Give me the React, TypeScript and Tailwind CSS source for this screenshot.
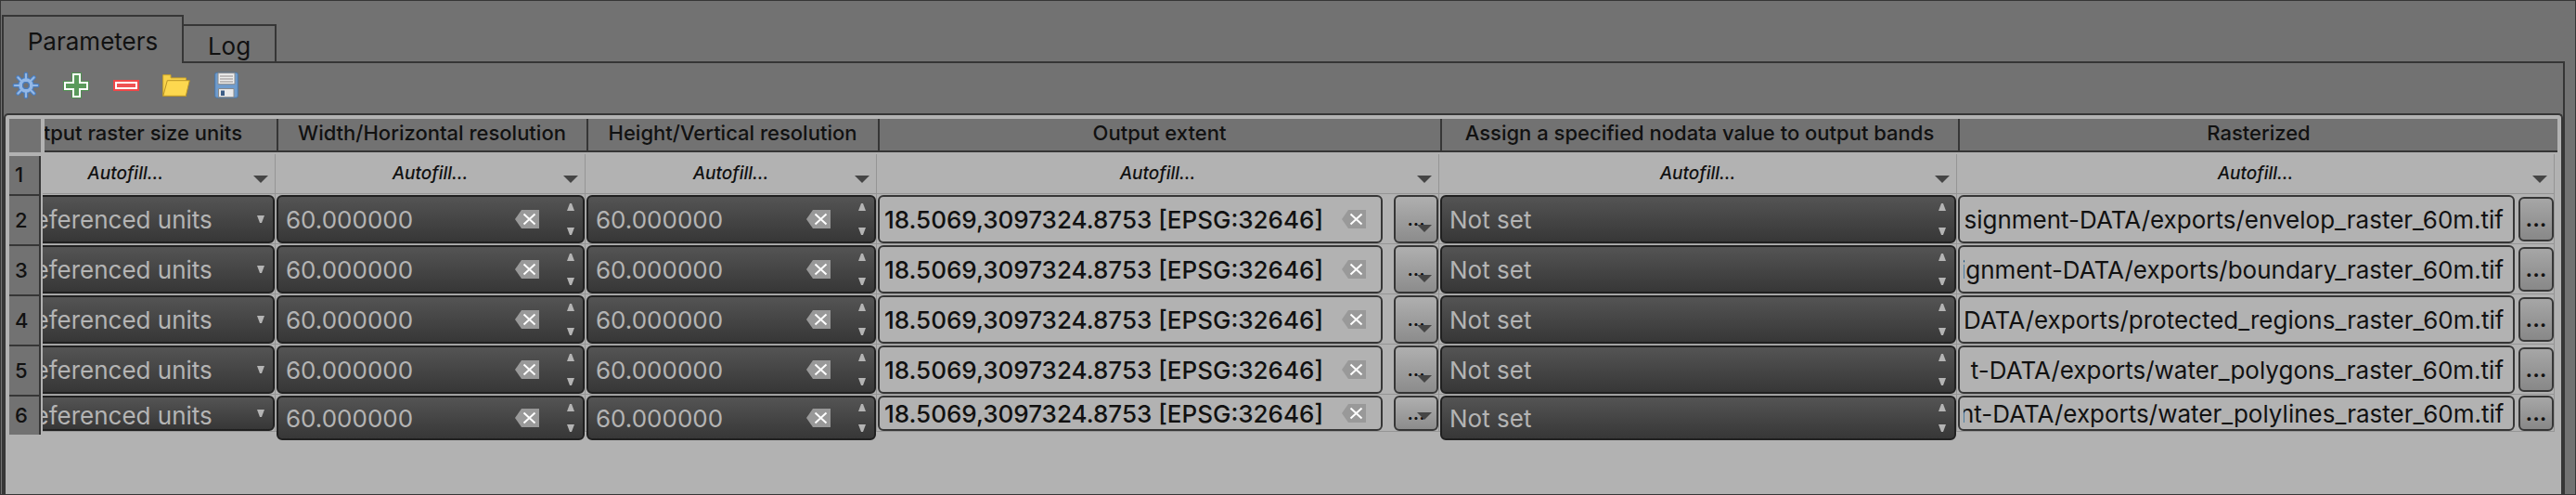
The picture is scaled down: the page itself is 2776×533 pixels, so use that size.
import React from "react";

const FONT = "font-[Inter,'Liberation_Sans',sans-serif]";

type RowSize = "normal" | "short";

function GearIcon() {
  return (
    <svg viewBox="0 0 30 30" className="size-[30px]" aria-hidden="true">
      {[
        { color: "#4a7dbd", width: 4.6 },
        { color: "#93b8e6", width: 2.2 },
      ].map((s) => (
        <g key={s.color} stroke={s.color} strokeWidth={s.width} strokeLinecap="round" fill="none">
          {[0, 45, 90, 135, 180, 225, 270, 315].map((a) => (
            <path key={a} d="M15 8.500V2.800" transform={`rotate(${a} 15 15)`} />
          ))}
          <circle cx="15" cy="15" r="5.800" strokeWidth={s.width + 1.6} />
        </g>
      ))}
      <circle cx="15" cy="15" r="3.300" fill="#727272" stroke="#4a7dbd" strokeWidth="1.2" />
    </svg>
  );
}

function PlusIcon() {
  return (
    <svg viewBox="0 0 30 30" className="size-[30px]" aria-hidden="true">
      <path d="M10 1h11v9h8v11h-8v8H10v-8H1V10h9z" fill="#4f8f50" />
      <path d="M12 3h7v9h8v7h-8v8h-7v-8H3v-7h9z" fill="#5a9a5b" stroke="#fff" strokeWidth="2" />
    </svg>
  );
}

function MinusIcon() {
  return (
    <svg viewBox="0 0 30 30" className="size-[30px]" aria-hidden="true">
      <path d="M1 9h28v12H1z" fill="#ef4748" />
      <path d="M4 12h22v6H4z" fill="#ef5253" stroke="#fff" strokeWidth="2" />
    </svg>
  );
}

function FolderIcon() {
  return (
    <svg viewBox="0 0 30 30" className="size-[30px]" aria-hidden="true">
      <path d="M.7 26.300V3.700H9v3.200h16.500v19.400z" fill="#f8d24a" stroke="#c9a227" />
      <path d="M.8 26.300 5.300 9.700h24l-4 16.600z" fill="#fdd84f" stroke="#b99426" />
    </svg>
  );
}

function SaveIcon() {
  return (
    <svg viewBox="0 0 30 30" className="size-[30px]" aria-hidden="true">
      <rect x="2.700" y="1.200" width="24.600" height="27" rx="2" fill="#6f9ccd" stroke="#4a77a8" />
      <path d="M6 1.700h18v12H6z" fill="#ededed" stroke="#8a8a8a" />
      <path d="M8 5h14M8 8h14M8 11h14" stroke="#8d8787" strokeWidth="1.2" />
      <path d="M6.500 18.500h16.500v9.200H6.500z" fill="#e9e9e9" stroke="#8a8a8a" />
      <path d="M9 20.500h4v5.500H9z" fill="#3d5e86" />
    </svg>
  );
}

function ClearIcon() {
  return (
    <svg viewBox="0 0 26 20" className="h-5 w-[26px]" aria-hidden="true">
      <path d="M0 10 7 0h19v20H7z" fill="#999" />
      <path d="M9.500 4.500l12 11M21.500 4.500l-12 11" stroke="#fff" strokeWidth="2" />
    </svg>
  );
}

function MenuArrow() {
  return (
    <svg viewBox="0 0 16 8" className="h-2 w-4" aria-hidden="true">
      <path d="M0 0h16L8 8z" fill="#454545" />
    </svg>
  );
}

function Tick({ up = false }: { up?: boolean }) {
  return (
    <svg viewBox="0 0 8 8" className="h-2 w-2" aria-hidden="true">
      <path d={up ? "M0 8h8L5 0H3z" : "M0 0h8L5 8H3z"} fill="#b4b4b4" />
    </svg>
  );
}

const DARK = "border-2 border-[#202020] bg-linear-to-b from-[#545454] to-[#373737] text-[#b4b4b4]";
const FIELD_BOX = "rounded-[6px] border-2 border-[#363636] bg-[#b2b2b2]";

function boxHeight(size: RowSize) {
  return size === "short" ? "h-[38px]" : "h-[52px]";
}

function cellFrame(size: RowSize) {
  return size === "short"
    ? "h-10 border-r border-b border-[#959595] pt-px pl-px"
    : "h-[54px] border-r border-b border-[#959595] pt-px pl-px";
}

function UnitsCell({ size, row }: { size: RowSize; row: number }) {
  return (
    <div className={`${cellFrame(size)} flex justify-end overflow-hidden`}>
      <div className="relative flex shrink-0">
        <select
          aria-label={`Output raster size units, row ${row}`}
          className={`${DARK} ${boxHeight(size)} appearance-none rounded-[6px] pr-[65px] pl-2.5 text-[26px]`}
        >
          <option>Georeferenced units</option>
        </select>
        <span className="pointer-events-none absolute inset-y-0 right-[11px] flex items-center">
          <Tick />
        </span>
      </div>
    </div>
  );
}

function Stepper({ label }: { label: string }) {
  return (
    <div className="flex h-full flex-col justify-between py-[7px] pr-[9px]">
      <button type="button" aria-label={`Increase ${label}`}>
        <Tick up />
      </button>
      <button type="button" aria-label={`Decrease ${label}`}>
        <Tick />
      </button>
    </div>
  );
}

function SpinCell({
  size,
  label,
  value,
  clearable = false,
}: {
  size: RowSize;
  label: string;
  value: string;
  clearable?: boolean;
}) {
  return (
    <div className={cellFrame(size)}>
      <div
        className={`${DARK} ${size === "short" ? "h-12" : "h-[52px]"} relative flex items-center rounded-[6px]`}
      >
        <input
          aria-label={label}
          defaultValue={value}
          className="h-full min-w-0 flex-1 bg-transparent pl-2 text-[26px] outline-none"
        />
        {clearable && (
          <button type="button" aria-label={`Clear ${label}`} className="mr-[30px]">
            <ClearIcon />
          </button>
        )}
        <Stepper label={label} />
      </div>
    </div>
  );
}

function showEnd(el: HTMLInputElement | null) {
  if (el) el.scrollLeft = el.scrollWidth;
}

function ExtentCell({ size, row }: { size: RowSize; row: number }) {
  return (
    <div className={`${cellFrame(size)} flex gap-3`}>
      <div className={`${FIELD_BOX} ${boxHeight(size)} flex min-w-0 flex-1 items-center pr-4 pl-1`}>
        <input
          ref={showEnd}
          aria-label={`Output extent, row ${row}`}
          defaultValue="18.5069,3097324.8753 [EPSG:32646]"
          className="h-full min-w-0 flex-1 bg-transparent text-right text-[26px] font-medium outline-none"
        />
        <button type="button" aria-label={`Clear output extent, row ${row}`} className="ml-5">
          <ClearIcon />
        </button>
      </div>
      <button
        type="button"
        aria-label={`Extent options, row ${row}`}
        className={`${boxHeight(size)} relative w-12 rounded-[6px] border-2 border-[#363636] bg-linear-to-b from-[#afafaf] to-[#8c8c8c] text-xl font-semibold`}
      >
        ...
        <span className="absolute right-[5px] bottom-2.5">
          <MenuArrow />
        </span>
      </button>
    </div>
  );
}

function PathCell({ size, row, value }: { size: RowSize; row: number; value: string }) {
  return (
    <div className={`${cellFrame(size)} flex gap-1`}>
      <div className={`${FIELD_BOX} ${boxHeight(size)} min-w-0 flex-1 pr-2.5 pl-1`}>
        <input
          ref={showEnd}
          aria-label={`Rasterized, row ${row}`}
          defaultValue={value}
          className="h-full w-full bg-transparent text-right text-[26px] outline-none"
        />
      </div>
      <button
        type="button"
        aria-label={`Browse, row ${row}`}
        className={`${size === "short" ? "h-[38px]" : "my-0.5 h-12"} w-[38px] rounded-[6px] border-2 border-[#363636] bg-linear-to-b from-[#a6a6a6] to-[#888888] text-2xl font-semibold`}
      >
        ...
      </button>
    </div>
  );
}

function AutofillCell({ clipped = false }: { clipped?: boolean }) {
  return (
    <div className="pt-0.5">
      <button
        type="button"
        className={`${clipped ? "grid-cols-[1fr_auto_120px]" : "grid-cols-[1fr_auto_1fr]"} grid h-[43px] w-full items-center border-r border-b border-[#959595] text-[19px] font-medium italic`}
      >
        <span />
        <span>Autofill...</span>
        <span className="flex justify-end pt-3 pr-[7px]">
          <MenuArrow />
        </span>
      </button>
    </div>
  );
}

function RowNumber({ n }: { n: number }) {
  const size = n === 1 ? "mt-1 h-[41px]" : n === 6 ? "h-[43px] border-t-2" : "h-[54px] border-t-2";
  return (
    <div
      className={`${size} mr-0.5 flex items-center border-r-2 border-[#363636] bg-[#727272] pl-1.5 text-[22px] font-medium`}
    >
      {n}
    </div>
  );
}

const HEADERS = [
  "Width/Horizontal resolution",
  "Height/Vertical resolution",
  "Output extent",
  "Assign a specified nodata value to output bands",
  "Rasterized",
];

const PATHS = [
  "signment-DATA/exports/envelop_raster_60m.tif",
  "ignment-DATA/exports/boundary_raster_60m.tif",
  "DATA/exports/protected_regions_raster_60m.tif",
  "t-DATA/exports/water_polygons_raster_60m.tif",
  "nt-DATA/exports/water_polylines_raster_60m.tif",
];

function BatchTable() {
  return (
    <table className="w-full table-fixed border-separate border-spacing-0 [&_td]:p-0 [&_td]:align-top [&_th]:p-0 [&_th]:align-top">
      <colgroup>
        <col className="w-9" />
        <col className="w-[251px]" />
        <col className="w-[334px]" />
        <col className="w-[314px]" />
        <col className="w-[606px]" />
        <col className="w-[558px]" />
        <col />
      </colgroup>
      <thead>
        <tr className="text-[22px] font-medium">
          <td>
            <div className="mr-0.5 h-9 bg-[#727272]" />
          </td>
          <th scope="col" className="font-medium">
            <div className="ml-0.5 flex h-9 items-center justify-end overflow-hidden border-b-2 border-[#363636] bg-[#727272] pr-9 pb-1 whitespace-nowrap">
              Output raster size units
            </div>
          </th>
          {HEADERS.map((h) => (
            <th key={h} scope="col" className="bg-[#727272] font-medium">
              <div className="flex h-9 items-center justify-center border-b-2 border-[#363636] pl-px whitespace-nowrap">
                <span className="h-full w-0.5 bg-[#363636]" />
                <span className="flex-1 pb-1">{h}</span>
              </div>
            </th>
          ))}
        </tr>
      </thead>
      <tbody>
        <tr>
          <th scope="row">
            <RowNumber n={1} />
          </th>
          <td>
            <AutofillCell clipped />
          </td>
          <td>
            <AutofillCell />
          </td>
          <td>
            <AutofillCell />
          </td>
          <td>
            <AutofillCell />
          </td>
          <td>
            <AutofillCell />
          </td>
          <td className="pr-[3px]!">
            <AutofillCell />
          </td>
        </tr>
        {PATHS.map((path, i) => {
          const row = i + 2;
          const size: RowSize = row === 6 ? "short" : "normal";
          return (
            <tr key={path}>
              <th scope="row">
                <RowNumber n={row} />
              </th>
              <td>
                <UnitsCell size={size} row={row} />
              </td>
              <td>
                <SpinCell size={size} label={`horizontal resolution, row ${row}`} value="60.000000" clearable />
              </td>
              <td>
                <SpinCell size={size} label={`vertical resolution, row ${row}`} value="60.000000" clearable />
              </td>
              <td>
                <ExtentCell size={size} row={row} />
              </td>
              <td>
                <SpinCell size={size} label={`nodata value, row ${row}`} value="Not set" />
              </td>
              <td className="pr-[3px]!">
                <PathCell size={size} row={row} value={path} />
              </td>
            </tr>
          );
        })}
      </tbody>
    </table>
  );
}

const TOOLS = [
  { label: "Settings", icon: <GearIcon /> },
  { label: "Add row", icon: <PlusIcon /> },
  { label: "Remove row", icon: <MinusIcon /> },
  { label: "Open", icon: <FolderIcon /> },
  { label: "Save", icon: <SaveIcon /> },
];

export default function App() {
  return (
    <main
      className={`${FONT} flex min-h-screen flex-col border border-[#363636] bg-[#727272] pt-[15px] pr-[11px] pl-px text-[#111]`}
    >
      <div role="tablist" className="relative flex items-end text-[26px]">
        <button
          type="button"
          role="tab"
          aria-selected="true"
          className="-mb-0.5 h-[52px] w-[196px] border-2 border-b-0 border-[#363636] bg-[#727272] pt-0.5"
        >
          Parameters
        </button>
        <button
          type="button"
          role="tab"
          aria-selected="false"
          className="-ml-0.5 h-10 w-[102px] border-2 border-b-0 border-[#363636] pt-0.5"
        >
          Log
        </button>
      </div>
      <section className="flex flex-1 flex-col border-2 border-b-0 border-[#363636]">
        <div role="toolbar" className="flex gap-6 pt-[9px] pb-[15px] pl-[9px]">
          {TOOLS.map((t) => (
            <button key={t.label} type="button" aria-label={t.label}>
              {t.icon}
            </button>
          ))}
        </div>
        <div className="flex-1 rounded-t-[5px] border-2 border-b-0 border-[#363636] bg-[#b2b2b2] p-1">
          <BatchTable />
        </div>
      </section>
    </main>
  );
}
